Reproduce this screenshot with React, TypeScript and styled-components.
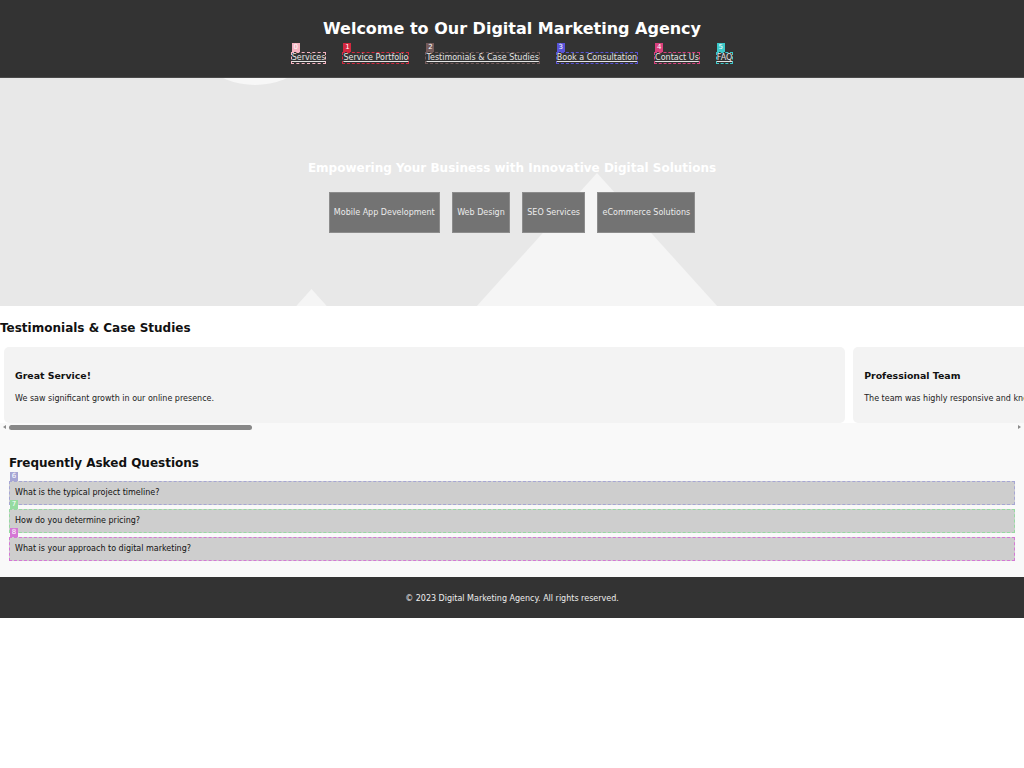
import React from "react";
import styled, { createGlobalStyle } from "styled-components";

const Global = createGlobalStyle`
  html, body { margin: 0; padding: 0; background: #fff; }
  body { font-family: "DejaVu Sans", "Liberation Sans", sans-serif; font-size: 8px; color: #111; }
  * { box-sizing: content-box; }
`;

const Header = styled.header`
  background: #333;
  color: #fff;
  padding: 19px 0 13px;
  text-align: center;
  border-bottom: 1px solid #4a4a4a;
`;

const Title = styled.h1`
  margin: 0 0 14px;
  font-size: 16px;
  line-height: 19px;
  font-weight: bold;
`;

const Nav = styled.nav`
  display: flex;
  justify-content: center;
  gap: 16px;
`;

const Marked = styled.span<{ $c: string }>`
  position: relative;
  border: 1px dashed ${(p) => p.$c};
`;

const Badge = styled.span<{ $c: string }>`
  position: absolute;
  left: 0;
  top: -10px;
  width: 8px;
  height: 9px;
  background: ${(p) => p.$c};
  color: #fff;
  font-size: 7px;
  line-height: 9px;
  text-align: center;
  text-decoration: none;
`;

const NavLink = styled.a`
  display: block;
  color: #e4e4e4;
  text-decoration: underline;
  font-size: 8px;
  line-height: 10px;
`;

const Hero = styled.section`
  position: relative;
  overflow: hidden;
  height: 145px;
  padding-top: 83px;
  background: #e8e8e8;
  text-align: center;
`;

const Deco = styled.svg`
  position: absolute;
  left: 0;
  top: 0;
  width: 1024px;
  height: 228px;
`;

const HeroContent = styled.div`
  position: relative;
`;

const HeroTitle = styled.h2`
  margin: 0 0 17px;
  font-size: 12px;
  line-height: 14px;
  font-weight: bold;
  color: #fff;
`;

const ServiceRow = styled.div`
  display: flex;
  justify-content: center;
  gap: 12.5px;
`;

const ServiceButton = styled.button`
  font-family: inherit;
  font-size: 8px;
  line-height: 10px;
  padding: 15px 4px 14px;
  background: #737373;
  color: #ececec;
  border: 1px solid #8c8c8c;
  border-radius: 0;
`;

const Testimonials = styled.section`
  background: #fff;
`;

const SectionTitle = styled.h2<{ $m: string }>`
  margin: ${(p) => p.$m};
  font-size: 12px;
  line-height: 14px;
  font-weight: bold;
  color: #111;
`;

const Slider = styled.div`
  display: flex;
  overflow: hidden;
`;

const Card = styled.div`
  flex: 0 0 80%;
  margin: 0 4px;
  padding: 23px 11px 19px;
  background: #f3f3f3;
  border-radius: 5px;
`;

const CardTitle = styled.h3`
  margin: 0 0 12px;
  font-size: 9.4px;
  line-height: 12px;
  font-weight: bold;
  color: #111;
`;

const CardText = styled.p`
  margin: 0;
  font-size: 8px;
  line-height: 10px;
  color: #222;
  white-space: nowrap;
`;

const ScrollBar = styled.div`
  display: flex;
  align-items: center;
  gap: 3px;
  height: 8px;
  padding: 0 3px;
  background: #f9f9f9;
`;

const Arrow = styled.button<{ $dir: "left" | "right" }>`
  width: 0;
  height: 0;
  padding: 0;
  background: none;
  border-top: 2px solid transparent;
  border-bottom: 2px solid transparent;
  border-left: ${(p) => (p.$dir === "right" ? "3px solid #8a8a8a" : "0")};
  border-right: ${(p) => (p.$dir === "left" ? "3px solid #8a8a8a" : "0")};
`;

const Track = styled.div`
  flex: 1;
  display: flex;
  align-items: center;
  height: 8px;
`;

const Thumb = styled.div`
  height: 5px;
  background: #888;
  border-radius: 3px;
`;

const Faq = styled.section`
  background: #f9f9f9;
  padding: 25px 9px 16px;
`;

const FaqList = styled.div`
  display: flex;
  flex-direction: column;
  gap: 4px;
`;

const FaqItem = styled.div<{ $c: string }>`
  position: relative;
  border: 1px dashed ${(p) => p.$c};
  background: #cecece;
  padding: 6px 5px;
  line-height: 10px;
  font-size: 8px;
  color: #111;
`;

const Footer = styled.footer`
  background: #333;
  color: #eee;
  text-align: center;
  padding: 17px 0 15px;
  line-height: 9px;
  font-size: 8px;
`;

const navItems = [
  { label: "Services", c: "#f5b3c0" },
  { label: "Service Portfolio", c: "#d3283f" },
  { label: "Testimonials & Case Studies", c: "#735a5a" },
  { label: "Book a Consultation", c: "#5953d8" },
  { label: "Contact Us", c: "#d9407e" },
  { label: "FAQ", c: "#3cc9c9" },
];

const services = ["Mobile App Development", "Web Design", "SEO Services", "eCommerce Solutions"];

const testimonials = [
  { t: "Great Service!", d: "We saw significant growth in our online presence." },
  { t: "Professional Team", d: "The team was highly responsive and knowledgeable." },
  { t: "Outstanding Results", d: "Our traffic doubled within three months." },
  { t: "Highly Recommended", d: "Creative ideas and flawless execution." },
  { t: "Excellent Support", d: "They were always there when we needed help." },
];

const faqs = [
  { q: "What is the typical project timeline?", c: "#a6a6d4" },
  { q: "How do you determine pricing?", c: "#95dba0" },
  { q: "What is your approach to digital marketing?", c: "#d577d5" },
];

// visible width / total scroll width of the testimonial row (each card 80% + padding + margins)
const visibleRatio = 1024 / (testimonials.length * (1024 * 0.8 + 22 + 8));

export default function App() {
  return (
    <>
      <Global />
      <Header>
        <Title>Welcome to Our Digital Marketing Agency</Title>
        <Nav>
          {navItems.map((n, i) => (
            <Marked key={n.label} $c={n.c}>
              <Badge $c={n.c}>{i}</Badge>
              <NavLink href="#">{n.label}</NavLink>
            </Marked>
          ))}
        </Nav>
      </Header>
      <Hero>
        <Deco viewBox="0 0 1024 228">
          <circle cx="255" cy="-69.6" r="76.6" fill="#f7f7f7" />
          <polygon points="597,95 448,260 746,260" fill="#f5f5f5" />
          <polygon points="311.5,211 281,245 342,245" fill="#f5f5f5" />
        </Deco>
        <HeroContent>
          <HeroTitle>Empowering Your Business with Innovative Digital Solutions</HeroTitle>
          <ServiceRow>
            {services.map((s) => (
              <ServiceButton key={s}>{s}</ServiceButton>
            ))}
          </ServiceRow>
        </HeroContent>
      </Hero>
      <Testimonials>
        <SectionTitle $m="15px 0 12px">Testimonials &amp; Case Studies</SectionTitle>
        <Slider>
          {testimonials.map((t) => (
            <Card key={t.t}>
              <CardTitle>{t.t}</CardTitle>
              <CardText>{t.d}</CardText>
            </Card>
          ))}
        </Slider>
        <ScrollBar>
          <Arrow $dir="left" aria-label="Scroll left" />
          <Track>
            <Thumb style={{ width: `${visibleRatio * 100}%` }} />
          </Track>
          <Arrow $dir="right" aria-label="Scroll right" />
        </ScrollBar>
      </Testimonials>
      <Faq>
        <SectionTitle $m="0 0 11px">Frequently Asked Questions</SectionTitle>
        <FaqList>
          {faqs.map((f, i) => (
            <FaqItem key={f.q} $c={f.c}>
              <Badge $c={f.c}>{i + 6}</Badge>
              {f.q}
            </FaqItem>
          ))}
        </FaqList>
      </Faq>
      <Footer>© 2023 Digital Marketing Agency. All rights reserved.</Footer>
    </>
  );
}
